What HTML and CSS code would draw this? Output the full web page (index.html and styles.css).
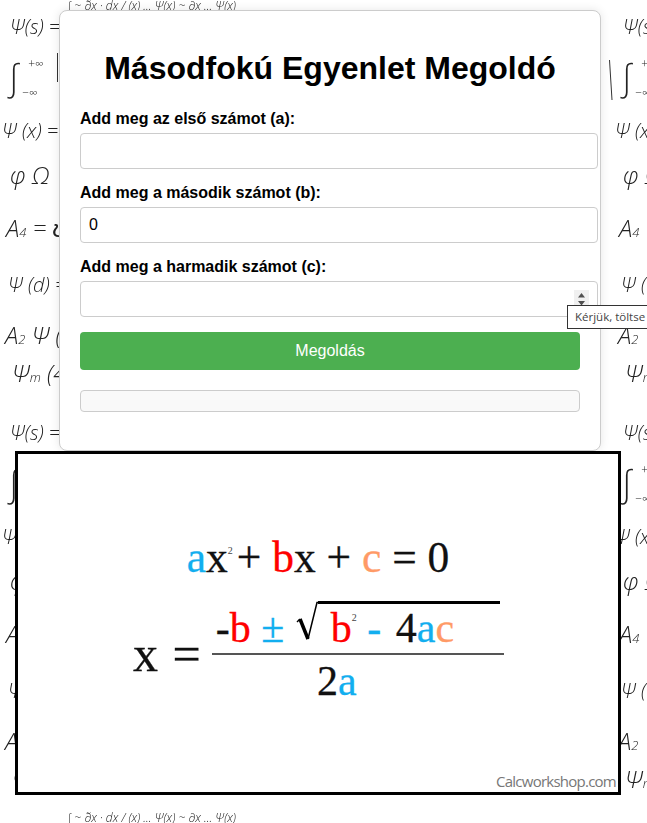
FILE: index.html
```html
<!DOCTYPE html>
<html lang="hu">
<head>
<meta charset="utf-8">
<title>Másodfokú Egyenlet Megoldó</title>
<link rel="stylesheet" href="styles.css">
</head>
<body>
<svg class="paper" width="647" height="823" aria-hidden="true">
  <defs>
    <pattern id="notes" width="613" height="406" patternUnits="userSpaceOnUse">
      <text class="note" x="10" y="34">Ψ(s) =</text>
      <text class="note big" x="9" y="90">∫</text>
      <text class="note small" x="28" y="68">+∞</text>
      <text class="note small" x="22" y="97">−∞</text>
      <line class="stroke" x1="57.500" y1="53" x2="57.500" y2="82"/>
      <line class="stroke" x1="609.500" y1="60" x2="612" y2="100"/>
      <text class="note" x="2" y="138">Ψ (x) =</text>
      <text class="note tall" x="10" y="184">φ Ω</text>
      <text class="note tall" x="6" y="237">A<tspan class="sub">4</tspan> = ʊ</text>
      <text class="note" x="8" y="292">Ψ (d) =</text>
      <text class="note tall" x="5" y="344">A<tspan class="sub">2</tspan> Ψ (</text>
      <text class="note tall" x="12" y="382">Ψ<tspan class="sub">m</tspan> (4</text>
      <text class="note small" x="68" y="10">∫ ~ ∂̃x · dx / (x) ... Ψ(x) ~ ∂x ... Ψ(x)</text>
    </pattern>
  </defs>
  <rect width="647" height="823" fill="url(#notes)"/>
</svg>

<main class="card">
  <h1 class="title">Másodfokú Egyenlet Megoldó</h1>
  <form class="form">
    <label class="label" for="a">Add meg az első számot (a):</label>
    <input class="field" id="a" type="text">
    <label class="label" for="b">Add meg a második számot (b):</label>
    <input class="field" id="b" type="text" value="0">
    <label class="label" for="c">Add meg a harmadik számot (c):</label>
    <div class="field-wrap">
      <input class="field" id="c" type="text">
      <span class="spinner">
        <svg width="15" height="16" viewBox="0 0 15 16"><path d="M7.500 3 11 7.500H4z M4 11h7l-3.500 4.500z" fill="#505050"/></svg>
      </span>
      <div class="tooltip">Kérjük, töltse</div>
    </div>
    <button class="submit" type="button">Megoldás</button>
  </form>
  <div class="result"></div>
</main>

<figure class="formula">
  <div class="eq-top"><span class="blue">a</span>x<sup class="sq sq-top">2</sup><span class="plus">+</span> <span class="red">b</span>x + <span class="orange">c</span> = 0</div>
  <div class="eq-main">
    <span class="x-eq">x =</span>
    <div class="fraction">
      <div class="numer"><span class="minus">-</span><span class="red">b</span> <span class="blue">±</span> <svg class="radical" width="23" height="44" viewBox="0 0 23 44"><path d="M2 22 5 19" fill="none" stroke="#000" stroke-width="1.500"/><path d="M5 19 13 39" fill="none" stroke="#000" stroke-width="3.500"/><path d="M13 39 22 2.500H23" fill="none" stroke="#000" stroke-width="1.500"/></svg><span class="radicand"><span class="red">b</span><sup class="sq sq-root">2</sup> <span class="blue">-</span> <span class="four">4</span><span class="blue">a</span><span class="orange">c</span></span></div>
      <div class="denom">2<span class="blue">a</span></div>
    </div>
  </div>
  <figcaption class="credit">Calcworkshop.com</figcaption>
</figure>
</body>
</html>
```
FILE: styles.css
```css
html, body {
  margin: 0;
  padding: 0;
  overflow: hidden;
  height: 823px;
}

body {
  background: #fff;
  font-family: "Liberation Sans", Arial, sans-serif;
  position: relative;
  padding-top: 10px;
  box-sizing: border-box;
}

.paper {
  position: absolute;
  left: 0;
  top: 0;
}

.note {
  font-family: "Open Sans", sans-serif;
  font-style: italic;
  font-weight: 300;
  font-size: 20px;
  fill: #222;
}

.note.tall { font-size: 24px; }
.note.big { font-size: 36px; }
.note.small { font-size: 12px; }
.sub { font-size: 13px; }

.stroke {
  stroke: #333;
  stroke-width: 1;
}

.card {
  position: relative;
  box-sizing: border-box;
  width: 542px;
  height: 441px;
  margin-left: 59px;
  padding: 19px 20px 0;
  background: #fff;
  border: 1px solid #ccc;
  border-radius: 8px;
  box-shadow: 0 0 10px rgba(0, 0, 0, 0.1);
}

.title {
  margin: 20px 0 23px;
  font-size: 32px;
  line-height: 37px;
  font-weight: 700;
  text-align: center;
  color: #000;
}

.form {
  display: block;
}

.label {
  display: block;
  margin-bottom: 5px;
  font-size: 16px;
  line-height: 18px;
  font-weight: 700;
  color: #000;
}

.field {
  display: block;
  width: 100%;
  box-sizing: content-box;
  height: 18px;
  padding: 8px;
  margin-bottom: 15px;
  border: 1px solid #ccc;
  border-radius: 4px;
  background: #fff;
  font: 16px "Liberation Sans", Arial, sans-serif;
  color: #000;
}

.field-wrap {
  position: relative;
}

.spinner {
  position: absolute;
  left: 494px;
  top: 9px;
  width: 15px;
  height: 16px;
  background: #f0f0f0;
}

.spinner svg {
  display: block;
}

.tooltip {
  position: absolute;
  left: 487px;
  top: 24px;
  width: 90px;
  height: 22px;
  padding: 0 7px;
  background: #fff;
  border: 1px solid #333;
  font: 11.500px/22px "Open Sans", sans-serif;
  color: #444;
  white-space: nowrap;
  z-index: 2;
}

.submit {
  display: block;
  width: 100%;
  height: 38px;
  padding: 0;
  border: 0;
  border-radius: 4px;
  background: #4caf50;
  color: #fff;
  font: 16px "Liberation Sans", Arial, sans-serif;
}

.result {
  box-sizing: border-box;
  height: 22px;
  margin-top: 20px;
  background: #f9f9f9;
  border: 1px solid #ccc;
  border-radius: 4px;
}

.formula {
  position: relative;
  box-sizing: border-box;
  width: 606px;
  height: 344px;
  margin: 0 0 0 15px;
  padding-top: 77px;
  background: #fff;
  border: 3px solid #000;
  font-family: "Liberation Serif", "Times New Roman", serif;
  color: #111;
  -webkit-text-stroke: 0.3px currentColor;
}

.eq-top {
  font-size: 43.500px;
  line-height: 52px;
  text-align: center;
  white-space: nowrap;
}

.eq-main {
  display: flex;
  align-items: center;
  margin: 17px 0 0 115px;
}

.x-eq {
  font-size: 50px;
  line-height: 60px;
  margin-right: 11px;
  word-spacing: 2px;
}

.fraction {
  width: 292px;
}

.numer {
  height: 53px;
  font-size: 42px;
  line-height: 48px;
  border-bottom: 2px solid #555;
  white-space: nowrap;
  padding-left: 4px;
}

.radical {
  display: inline-block;
  vertical-align: -2px;
}

.radicand {
  display: inline-block;
  border-top: 3px solid #000;
  width: 169px;
  padding-left: 13px;
}

.four {
  margin-left: 4px;
}

.denom {
  font-size: 42px;
  line-height: 52px;
  text-align: center;
  padding-right: 42px;
}

.sq {
  font-size: 10px;
  line-height: 0;
  vertical-align: 18px;
  color: #444;
  -webkit-text-stroke: 0;
}

.sq-top {
  margin-right: 4px;
}

.sq-root {
  vertical-align: 21px;
}

.blue { color: #12aeef; }
.red { color: #ff0000; }
.orange { color: #ff9a66; }

.credit {
  position: absolute;
  right: 2px;
  bottom: 1px;
  font: 15px/20px "Open Sans", sans-serif;
  letter-spacing: -0.75px;
  color: #777;
  -webkit-text-stroke: 0;
}
```
